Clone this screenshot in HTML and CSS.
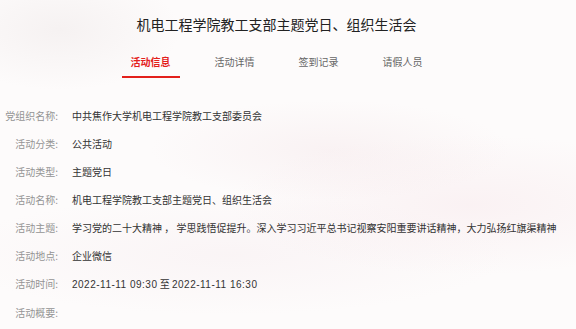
FILE: index.html
```html
<!DOCTYPE html>
<html lang="zh-CN">
<head>
  <meta charset="UTF-8" />
  <meta name="viewport" content="width=device-width, initial-scale=1.0" />
  <title>活动信息</title>
  <link rel="stylesheet" href="styles.css">
</head>
<body>

<div class="page">
  <h1 class="title">机电工程学院教工支部主题党日、组织生活会</h1>

  <!-- Tabs -->
  <div class="tabs">
    <div class="tab active">活动信息</div>
    <div class="tab">活动详情</div>
    <div class="tab">签到记录</div>
    <div class="tab">请假人员</div>
  </div>

  <!-- Activity info -->
  <div class="info">
    <div class="label">党组织名称:</div>
    <div class="value">中共焦作大学机电工程学院教工支部委员会</div>

    <div class="label">活动分类:</div>
    <div class="value">公共活动</div>

    <div class="label">活动类型:</div>
    <div class="value">主题党日</div>

    <div class="label">活动名称:</div>
    <div class="value">机电工程学院教工支部主题党日、组织生活会</div>

    <div class="label">活动主题:</div>
    <div class="value">学习党的二十大精神 ， 学思践悟促提升。深入学习习近平总书记视察安阳重要讲话精神，大力弘扬红旗渠精神</div>

    <div class="label">活动地点:</div>
    <div class="value">企业微信</div>

    <div class="label">活动时间:</div>
    <div class="value"><span class="num">2022-11-11 09:30</span> 至 <span class="num">2022-11-11 16:30</span></div>

    <div class="label">活动概要:</div>
    <div class="value"></div>
  </div>
</div>

</body>
</html>
```

FILE: styles.css
```css
html,
body {
  height: 100%;
}

body {
  margin: 0;
  font-family: "Noto Sans CJK SC", "Noto Sans", sans-serif;
  color: #333;
  background-color: #fdfbfb;
  background-image:
    radial-gradient(ellipse 180px 50px at 330px 150px, rgba(236, 210, 215, 0.22), transparent),
    radial-gradient(ellipse 240px 70px at 470px 205px, rgba(240, 208, 215, 0.22), transparent),
    radial-gradient(ellipse 280px 60px at 230px 255px, rgba(238, 218, 224, 0.2), transparent),
    radial-gradient(ellipse 120px 60px at 60px 30px, rgba(232, 224, 224, 0.35), transparent);
  overflow: hidden;
}

.page {
  width: 553px;
  padding-top: 14px;
}

.title {
  margin: 0;
  font-size: 14px;
  font-weight: normal;
  line-height: 20px;
  text-align: center;
  color: #222;
}

.tabs {
  display: flex;
  justify-content: center;
  gap: 26px;
  margin-top: 21px;
}

.tab {
  width: 58px;
  font-size: 10px;
  line-height: 14px;
  text-align: center;
  color: #666;
  padding-bottom: 7px;
  border-bottom: 2px solid transparent;
}

.tab.active {
  color: #e3201b;
  font-weight: bold;
  border-bottom-color: #e3201b;
}

.info {
  display: grid;
  grid-template-columns: 58px 1fr;
  column-gap: 14px;
  row-gap: 14px;
  margin-top: 31px;
  font-size: 10px;
  line-height: 14px;
}

.label {
  text-align: right;
  color: #949494;
  white-space: nowrap;
}

.value {
  color: #333;
  white-space: nowrap;
  min-height: 14px;
}

.num {
  font-family: "Liberation Sans", Arial, sans-serif;
  letter-spacing: 0.5px;
}
```
